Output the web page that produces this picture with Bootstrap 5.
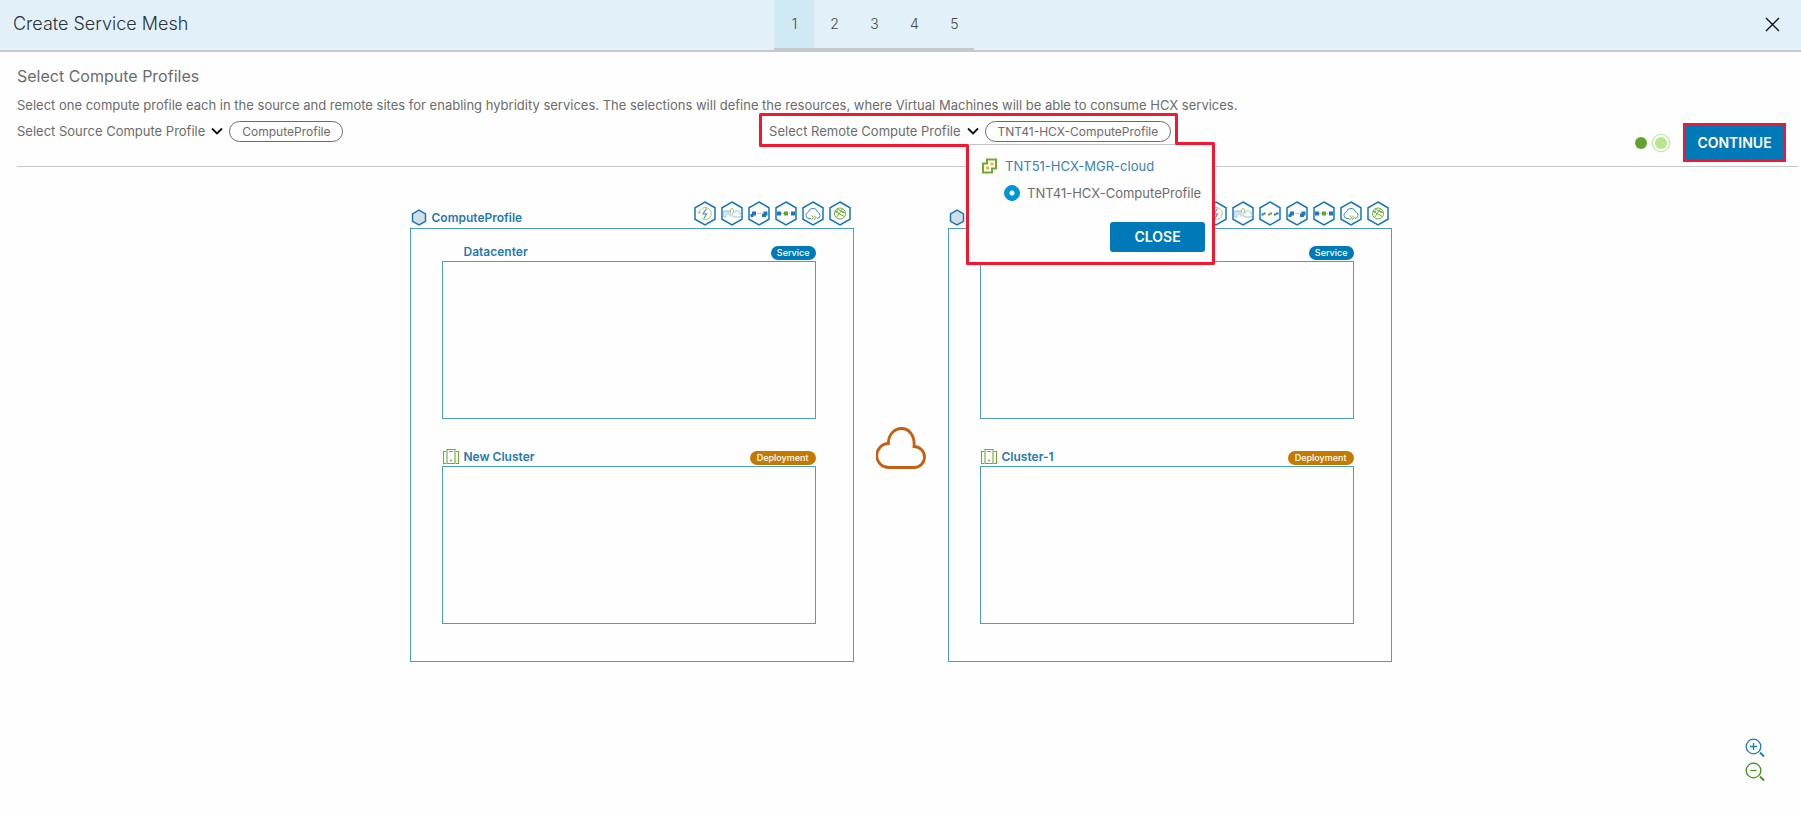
<!DOCTYPE html>
<html lang="en">
<head>
<meta charset="utf-8">
<meta name="viewport" content="width=device-width, initial-scale=1">
<title>Create Service Mesh</title>
<link href="https://cdn.jsdelivr.net/npm/bootstrap@5.3.0/dist/css/bootstrap.min.css" rel="stylesheet">
<style>
  :root { --blue: #0079b8; --line: #4c9bcb; --red: #f5162f; }
  body { font-family: Inter, "Open Sans", sans-serif; font-size: 13px; line-height: 20px; color: #6c6c6c; background: #fefefe; }
  svg { display: block; flex: none; }
  .wizard-bar { height: 52px; background: #e1f0f9; border-bottom: 2px solid #c5c9cb; display: grid; grid-template-columns: 43% auto 1fr; }
  .wizard-title { font-size: 18px; line-height: 48px; font-weight: 300; color: #2b3236; padding-left: 13px; }
  .steps { border-bottom: 2px solid #c8c8c8; }
  .step-btn { width: 40px; height: 48px; font-size: 14px; font-weight: 300; border: 0; background: none; color: #484848; padding: 0; }
  .step-btn.active { background: #d0eaf4; }
  .close-btn { border: 0; background: none; padding: 0; margin-right: 21px; height: 48px; color: #111; }
  .intro { padding: 12px 3px 0 17px; }
  .intro h2 { font-size: 16px; line-height: 24px; font-weight: 400; margin: 0 0 7px; }
  .intro p { margin: 0; }
  .picker-row { min-height: 52px; border-bottom: 1px solid #c8c8c8; }
  .picker { padding-top: 6px; line-height: 20px; }
  .picker-toggle { border: 0; background: none; padding: 0; color: inherit; gap: 6px; }
  .picker-toggle svg { color: #111; }
  .pill { border: 1px solid #6a6a6a; border-radius: 11px; height: 21px; line-height: 19px; padding: 0 12px; font-size: 12px; margin-left: 6px; }
  .remote { padding-left: 10px; }
  .outline-mark { position: absolute; left: 0; top: -2px; z-index: 3; pointer-events: none; }
  .profile-menu { position: absolute; left: 209px; top: 29px; z-index: 2; width: 245px; height: 119px; background: #fefefe; border-top: 1px solid #c4c4c4; padding: 11px 8px 0 14px; }
  .profile-menu a { color: #3783b8; text-decoration: none; }
  .profile-menu .form-check-input { width: 16px; height: 16px; margin: 0; }
  .profile-menu .form-check-input:checked { background-color: #0095d3; border-color: #0095d3; background-image: radial-gradient(circle, #fff 2px, transparent 3px); }
  .option { padding-left: 22px; margin-top: 7px; gap: 7px; }
  .solid { background: var(--blue); color: #fff; border: 0; font-size: 14px; font-weight: 600; padding: 0; }
  .solid:hover { background: #00679c; color: #fff; }
  .close-menu { width: 95px; height: 30px; border-radius: 3px; margin-top: 19px; }
  .continue { width: 103px; height: 39px; border: 3px solid var(--red); border-radius: 0; }
  .actions { padding: 8px 12px 0 0; gap: 12px; }
  .diagram { padding-top: 34px; gap: 22px; }
  .site { width: 444px; color: #1f7ab3; font-weight: 600; font-size: 12px; line-height: 16px; }
  .site-head { height: 27px; gap: 5px; padding: 0 3px 0 1px; }
  .site-head > * { margin-bottom: 2px; }
  .services { gap: 5px; }
  .site-box { border: 1px solid var(--line); padding: 0 37px 37px 31px; }
  .group-head { height: 32px; gap: 5px; padding-bottom: 1px; }
  .group-head + .group-box + .group-head { height: 47px; }
  .group-box { height: 158px; border: 1px solid var(--line); }
  .indent { margin-left: 22px; }
  .tag { margin-left: auto; border-radius: 7px; height: 14px; line-height: 13px; font-size: 9px; padding: 0 6px; color: #fff; background: var(--blue); font-weight: 500; }
  .tag-deploy { background: #c47a00; padding: 0 7px; }
  .cloud { margin-top: 32px; }
  .zoom-tools { margin: auto 36px 35px auto; gap: 4px; }
  .zoom-tools button { border: 0; background: none; padding: 0; }
</style>
</head>
<body class="min-vh-100 d-flex flex-column">
<svg width="0" height="0" class="position-absolute" aria-hidden="true">
  <symbol id="hex" viewBox="0 0 22 25"><path d="M11 1 21 6.800V18.200L11 24 1 18.200V6.800Z" fill="#fff" stroke="#1478b5" stroke-width="1.500"/></symbol>
  <symbol id="s-power" viewBox="0 0 22 25"><use href="#hex"/><path d="M8 7.500a6 6 0 1 1-.5 9.700M5 12a6 6 0 0 1 2-4M3.700 10.500 5 12.500l1.800-1.700" fill="none" stroke="#a5cc7b"/><path d="M12.500 7.500 9 12.800h3.600L10 17.500" fill="none" stroke="#5a9dcb" stroke-width="1.300"/></symbol>
  <symbol id="s-wan" viewBox="0 0 22 25"><use href="#hex"/><path d="M9 15.500V10H2.800v6H5v-3M5 10v3M7 10v4M13 16h5a2 2 0 0 0 .5-4 2.500 2.500 0 0 0-4.800-.8A2.400 2.400 0 0 0 13 16Z" fill="none" stroke="#8fbbd9" stroke-width=".9"/><path d="M9.500 12V9a1.500 1.500 0 0 1 3 0V12" fill="none" stroke="#a5cc7b"/></symbol>
  <symbol id="s-bulk" viewBox="0 0 22 25"><use href="#hex"/><path d="M4 10.500h4v4H4zM2.500 13h3v3h-3zM15.500 10.500h4v4h-4zM14 12.500h4v3.500h-4z" fill="#1f78b4"/><path d="M9.500 12.500h4" stroke="#8bbb4d" stroke-dasharray="1.200 1"/></symbol>
  <symbol id="s-motion" viewBox="0 0 22 25"><use href="#hex"/><path d="M2 12.500h18" stroke="#75b4dc" stroke-dasharray="1 1"/><path d="M2 10.500h4v4H2zM16 10.500h4v4h-4z" fill="#1f78b4"/><path d="M9 10.500h4v4H9z" fill="#62a420"/></symbol>
  <symbol id="s-rep" viewBox="0 0 22 25"><use href="#hex"/><path d="M2.500 12.500h2v2h-2zM4.500 11.500h2v2h-2zM15 12.500h2v2h-2zM17 11.500h2.500v2H17z" fill="#1f78b4"/><path d="M9 12.500h2v2H9zM11 11.500h2v2h-2z" fill="#62a420"/></symbol>
  <symbol id="s-cloud" viewBox="0 0 22 25"><use href="#hex"/><path d="M9 17.500H7A3.300 3.300 0 0 1 6.500 11 4.600 4.600 0 0 1 15.500 11 3.300 3.300 0 0 1 15 17.500" fill="none" stroke="#4590c3"/><path d="m9.500 14.500 2 2-2 2.500M12 14.500l2 2-2 2.500" fill="none" stroke="#62a420" stroke-width=".9"/></symbol>
  <symbol id="s-net" viewBox="0 0 22 25"><use href="#hex"/><g fill="none" stroke="#72ad35"><circle cx="11" cy="12.500" r="5.500"/><path d="M6 10.500 15.500 15.500M7.500 16.500 13.500 8M8 8l8 4"/></g><circle cx="8" cy="10.500" r="1" fill="#72ad35"/><circle cx="14" cy="11" r="1" fill="#72ad35"/></symbol>
  <symbol id="s-profile" viewBox="0 0 16 17"><path d="M8 1.200 14.500 4.900v7.400L8 15.900 1.500 12.300V4.900Z" fill="#d3dde6" stroke="#1478b5" stroke-width="1.500"/></symbol>
  <symbol id="s-cluster" viewBox="0 0 17 17"><g fill="none" stroke="#6dac32" stroke-width="1.100"><path d="M5 1.500h8v14H5zM7 3.500h4M4 3.500H1.500v12H4M14 3.500h2.500v12H14"/></g><circle cx="9" cy="12.500" r="1" fill="#6dac32"/></symbol>
  <symbol id="s-chevron" viewBox="0 0 12 8"><path d="m1 1.500 5 5 5-5" fill="none" stroke="currentColor" stroke-width="1.800"/></symbol>
</svg>

<header class="wizard-bar">
  <h1 class="wizard-title m-0">Create Service Mesh</h1>
  <nav class="steps d-flex" aria-label="Steps">
    <button class="step-btn active" aria-current="step">1</button><button class="step-btn">2</button><button class="step-btn">3</button><button class="step-btn">4</button><button class="step-btn">5</button>
  </nav>
  <button class="close-btn ms-auto" aria-label="Close wizard"><svg width="15" height="15" viewBox="0 0 15 15"><path d="m1 1 13 13M14 1 1 14" stroke="currentColor" stroke-width="1.400"/></svg></button>
</header>

<section class="intro">
  <h2>Select Compute Profiles</h2>
  <p>Select one compute profile each in the source and remote sites for enabling hybridity services. The selections will define the resources, where Virtual Machines will be able to consume HCX services.</p>
  <div class="picker-row row g-0">
    <div class="picker col-5 d-flex align-items-start">
      <button class="picker-toggle d-flex align-items-center">Select Source Compute Profile <svg width="12" height="8"><use href="#s-chevron"/></svg></button>
      <span class="pill">ComputeProfile</span>
    </div>
    <div class="picker remote col-5 d-flex align-items-start position-relative">
      <button class="picker-toggle d-flex align-items-center" aria-expanded="true">Select Remote Compute Profile <svg width="12" height="8"><use href="#s-chevron"/></svg></button>
      <span class="pill">TNT41-HCX-ComputeProfile</span>
      <div class="profile-menu">
        <div class="d-flex align-items-center gap-2">
          <svg width="15" height="16" viewBox="0 0 15 16"><path d="M5 1.500h9V10.500H10V14.500H1V5.500H5Z" fill="#fff" stroke="#6bab2a" stroke-width="2"/><path d="M8.500 4.500h3v3h-3zM4 8.500h3v3H4z" fill="#f5b32f"/></svg>
          <a href="#">TNT51-HCX-MGR-cloud</a>
        </div>
        <div class="option d-flex align-items-center">
          <input class="form-check-input" type="radio" name="remote" id="remote-profile" checked>
          <label for="remote-profile">TNT41-HCX-ComputeProfile</label>
        </div>
        <button class="solid close-menu d-block ms-auto">CLOSE</button>
      </div>
      <svg class="outline-mark" width="458" height="154" viewBox="0 0 458 154" aria-hidden="true"><path d="M1.500 1.500H417.500V30.500H454.500V150.500H208.500V32.500H1.500Z" fill="none" stroke="#f5162f" stroke-width="3" stroke-linejoin="round"/></svg>
    </div>
    <div class="actions col d-flex align-items-start justify-content-end">
      <svg width="36" height="39" viewBox="0 0 36 39" aria-hidden="true"><circle cx="6" cy="20" r="6" fill="#60a330"/><circle cx="26" cy="20" r="8.700" fill="#fff" stroke="#c3eaa3" stroke-width="1.300"/><circle cx="26" cy="20" r="6" fill="#b5e78c"/></svg>
      <button class="solid continue">CONTINUE</button>
    </div>
  </div>
</section>

<main class="diagram d-flex justify-content-center align-items-center">
  <div class="site">
    <div class="site-head d-flex align-items-end">
      <svg width="16" height="17"><use href="#s-profile"/></svg><span>ComputeProfile</span>
      <div class="services d-flex ms-auto align-self-start">
        <svg width="22" height="25"><use href="#s-power"/></svg><svg width="22" height="25"><use href="#s-wan"/></svg><svg width="22" height="25"><use href="#s-bulk"/></svg><svg width="22" height="25"><use href="#s-motion"/></svg><svg width="22" height="25"><use href="#s-cloud"/></svg><svg width="22" height="25"><use href="#s-net"/></svg>
      </div>
    </div>
    <div class="site-box">
      <div class="group-head d-flex align-items-end"><span class="indent">Datacenter</span><span class="tag">Service</span></div>
      <div class="group-box"></div>
      <div class="group-head d-flex align-items-end"><svg width="17" height="17"><use href="#s-cluster"/></svg><span>New Cluster</span><span class="tag tag-deploy">Deployment</span></div>
      <div class="group-box"></div>
    </div>
  </div>
  <svg class="cloud" width="50" height="44" viewBox="0 0 50 44" role="img" aria-label="Cloud"><path d="M13 41.500A12 12 0 0 1 12.500 17.500C12 9 18 2.500 25.500 2.500S39 9.500 38 20.500A10.500 10.500 0 0 1 38 41.500Z" fill="none" stroke="#c65f11" stroke-width="2.800"/></svg>
  <div class="site">
    <div class="site-head d-flex align-items-end">
      <svg width="16" height="17"><use href="#s-profile"/></svg>
      <div class="services d-flex ms-auto align-self-start">
        <svg width="22" height="25"><use href="#s-power"/></svg><svg width="22" height="25"><use href="#s-wan"/></svg><svg width="22" height="25"><use href="#s-rep"/></svg><svg width="22" height="25"><use href="#s-bulk"/></svg><svg width="22" height="25"><use href="#s-motion"/></svg><svg width="22" height="25"><use href="#s-cloud"/></svg><svg width="22" height="25"><use href="#s-net"/></svg>
      </div>
    </div>
    <div class="site-box">
      <div class="group-head d-flex align-items-end"><span class="tag">Service</span></div>
      <div class="group-box"></div>
      <div class="group-head d-flex align-items-end"><svg width="17" height="17"><use href="#s-cluster"/></svg><span>Cluster-1</span><span class="tag tag-deploy">Deployment</span></div>
      <div class="group-box"></div>
    </div>
  </div>
</main>

<div class="zoom-tools d-flex flex-column">
  <button aria-label="Zoom in"><svg width="20" height="20" viewBox="0 0 20 20" fill="none" stroke="#1b7cba" stroke-width="1.300"><circle cx="8.500" cy="8.500" r="7.300"/><path d="M8.500 5v7M5 8.500h7"/><path d="m15 14.500 4 4" stroke-width="1.800"/></svg></button>
  <button aria-label="Zoom out"><svg width="20" height="20" viewBox="0 0 20 20" fill="none" stroke="#3c9516" stroke-width="1.300"><circle cx="8.500" cy="8.500" r="7.300"/><path d="M5.500 8.500h6"/><path d="m15 14.500 4 4" stroke-width="1.800"/></svg></button>
</div>
<script src="https://cdn.jsdelivr.net/npm/bootstrap@5.3.0/dist/js/bootstrap.bundle.min.js"></script>
</body>
</html>
